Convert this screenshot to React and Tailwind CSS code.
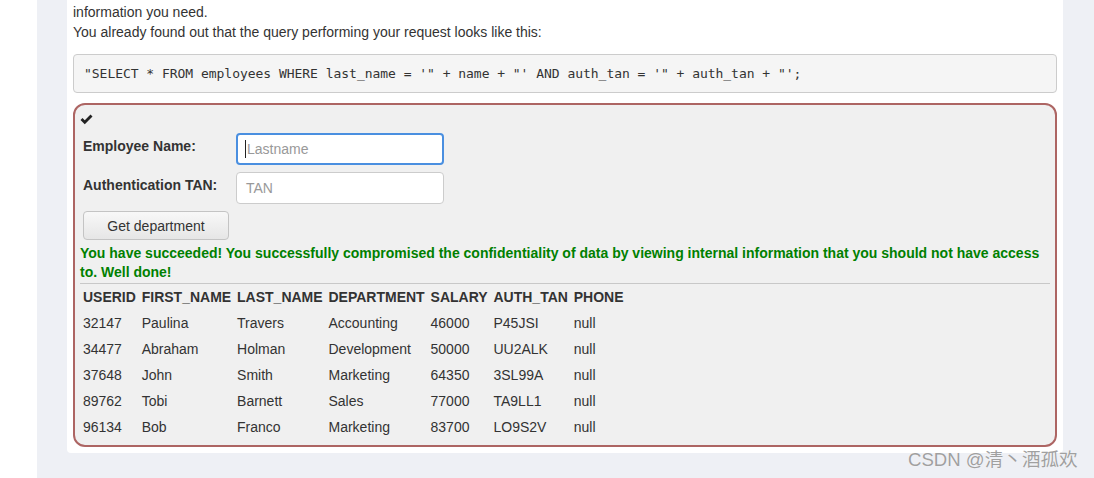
import React from "react";

const rows = [
  ["32147", "Paulina", "Travers", "Accounting", "46000", "P45JSI", "null"],
  ["34477", "Abraham", "Holman", "Development", "50000", "UU2ALK", "null"],
  ["37648", "John", "Smith", "Marketing", "64350", "3SL99A", "null"],
  ["89762", "Tobi", "Barnett", "Sales", "77000", "TA9LL1", "null"],
  ["96134", "Bob", "Franco", "Marketing", "83700", "LO9S2V", "null"],
];

const cols = ["USERID", "FIRST_NAME", "LAST_NAME", "DEPARTMENT", "SALARY", "AUTH_TAN", "PHONE"];

function Check() {
  return (
    <svg width="13" height="11" viewBox="0 0 26 22" className="block">
      <path d="M1 12 L5 8 L9.5 12.5 L21 1 L25 5 L9.5 20.5 Z" fill="#222" />
    </svg>
  );
}

export default function App() {
  return (
    <div className="relative flex min-h-[478px] bg-white font-['Liberation_Sans',Arial,sans-serif] text-[14px] leading-[20px] text-[#333]">
      <div className="w-[37px] shrink-0 bg-white" />
      <div className="flex-1 bg-[#eef0f5] pl-[30px] pr-[31px] pb-[25px]">
        <div className="rounded-b-[4px] bg-white px-[6px] pt-[2px] pb-[6px]">
          <p>information you need.</p>
          <p>You already found out that the query performing your request looks like this:</p>

          <pre className="mt-[12px] mb-[10px] rounded-[4px] border border-[#ccc] bg-[#f5f5f5] px-[10px] py-[9.5px] font-['DejaVu_Sans_Mono',monospace] text-[13px] leading-[18px] tracking-[-0.03px] text-[#333]">
            "SELECT * FROM employees WHERE last_name = '" + name + "' AND auth_tan = '" + auth_tan + "';
          </pre>

          <div className="rounded-[12px] border-2 border-[#ad6563] bg-[#f0f0f0] pt-[9px] pb-[5px]">
            <div className="pl-[5px]">
              <Check />
            </div>

            <div className="mt-[8px] flex flex-col gap-[7px] pl-[8px]">
              <div className="flex items-start">
                <label className="w-[153px] pt-[3px] font-bold">Employee Name:</label>
                <div className="flex h-[32px] w-[208px] items-center rounded-[4px] border-2 border-[#4a8fe0] bg-white px-[7px] text-[#999]">
                  <span className="mr-[1px] h-[18px] w-px bg-[#222]" />
                  Lastname
                </div>
              </div>
              <div className="flex items-start">
                <label className="w-[153px] pt-[3px] font-bold">Authentication TAN:</label>
                <div className="flex h-[32px] w-[208px] items-center rounded-[4px] border border-[#ccc] bg-white px-[9px] text-[#999]">
                  TAN
                </div>
              </div>
              <div>
                <button className="h-[29px] w-[146px] rounded-[4px] border border-[#c4c4c4] bg-gradient-to-b from-[#f8f8f8] to-[#e6e6e6] text-[14px] text-[#333]">
                  Get department
                </button>
              </div>
            </div>

            <div className="mt-[4px] px-[5px]">
              <p className="font-bold leading-[19px] text-[#008000]">
                You have succeeded! You successfully compromised the confidentiality of data by viewing internal information that you should not have access to. Well done!
              </p>
              <div className="mt-[1px] h-px bg-[#c8c8c8]" />
              <table className="border-collapse">
                <thead>
                  <tr>
                    {cols.map((c) => (
                      <th key={c} className="px-[2.95px] py-[3px] text-left font-bold">
                        {c}
                      </th>
                    ))}
                  </tr>
                </thead>
                <tbody>
                  {rows.map((r) => (
                    <tr key={r[0]}>
                      {r.map((v, i) => (
                        <td key={i} className="px-[2.95px] py-[3px]">
                          {v}
                        </td>
                      ))}
                    </tr>
                  ))}
                </tbody>
              </table>
            </div>
          </div>
        </div>
      </div>

      <div className="absolute left-[908px] top-[448px] font-['Liberation_Sans','Noto_Sans_CJK_SC',sans-serif] text-[18.6px] leading-[24px] text-[#a0a0a0] [text-shadow:0_0_1px_#fff]">
        CSDN @清丶酒孤欢
      </div>
    </div>
  );
}
